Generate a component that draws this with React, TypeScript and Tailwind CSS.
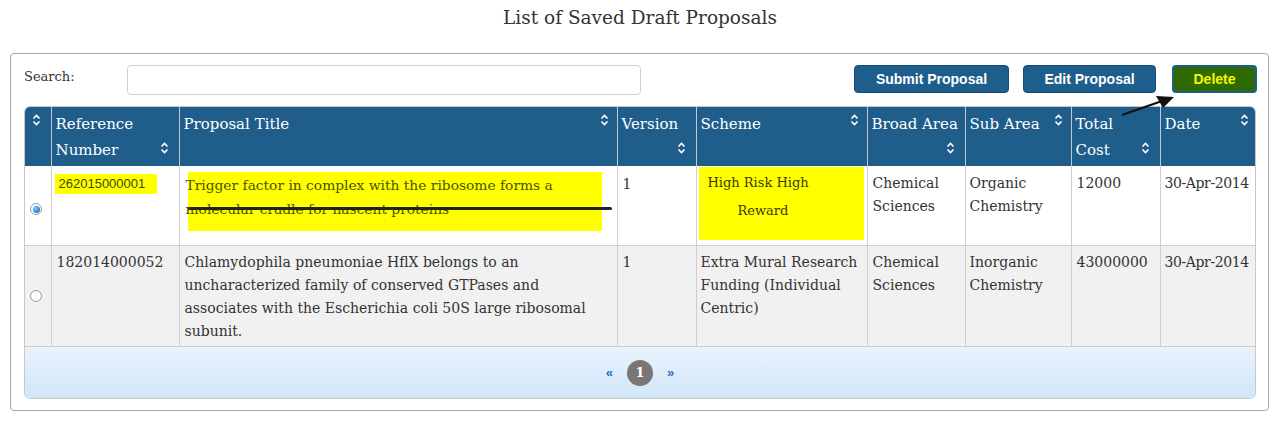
import React from "react"

const slab = { fontFamily: '"DejaVu Serif", "Liberation Serif", serif' }
const arial = { fontFamily: '"Liberation Sans", Arial, sans-serif' }

type Col = { label: React.ReactNode; w: string; sort: "top" | "bottom" | "center" }

const cols: Col[] = [
  { label: "", w: "w-[26px]", sort: "center" },
  { label: "Reference Number", w: "w-[128px]", sort: "bottom" },
  { label: "Proposal Title", w: "w-[438px]", sort: "top" },
  { label: "Version", w: "w-[79px]", sort: "bottom" },
  { label: "Scheme", w: "w-[171px]", sort: "top" },
  { label: "Broad Area", w: "w-[98px]", sort: "bottom" },
  { label: "Sub Area", w: "w-[106px]", sort: "top" },
  { label: <>Total<br />Cost</>, w: "w-[89px]", sort: "bottom" },
  { label: "Date", w: "w-[97px]", sort: "top" },
]

function SortIcon() {
  return (
    <svg width="9" height="12" viewBox="0 0 9 12" fill="none" stroke="white" strokeWidth="1.6">
      <path d="M1.5 4.5 L4.5 1.5 L7.5 4.5" />
      <path d="M1.5 7.5 L4.5 10.5 L7.5 7.5" />
    </svg>
  )
}

function Radio({ checked }: { checked?: boolean }) {
  return (
    <span className="inline-grid place-items-center w-[12px] h-[12px] rounded-full border border-[#9a9a9a] bg-white">
      {checked && (
        <span className="w-[7px] h-[7px] rounded-full bg-[radial-gradient(circle_at_35%_35%,#7cc4ff,#0a5fae)]" />
      )}
    </span>
  )
}

export default function App() {
  return (
    <div className="w-[1280px] h-[421px] bg-white text-[#333] overflow-hidden relative" style={slab}>
      <h1 className="text-center text-[18.5px] leading-[26px] pt-[5px] h-[53px]">List of Saved Draft Proposals</h1>

      <div className="mx-[10px] w-[1259px] border border-[#a8a8a8] rounded-[4px] px-[13px] pt-[11px] pb-[11px]">
        {/* toolbar */}
        <div className="flex items-start h-[41px]">
          <span className="text-[13px] leading-[20px] mt-[2px] w-[103px]">Search:</span>
          <input className="w-[514px] h-[30px] border border-[#d0d0d0] rounded-[4px] bg-white" />
          <div className="ml-auto flex mr-[-2px]" style={arial}>
            <button className="w-[155px] h-[28px] rounded-[4px] bg-[#1d5e8c] border border-[#174d75] text-white font-bold text-[14px]">
              Submit Proposal
            </button>
            <button className="ml-[14px] w-[133px] h-[28px] rounded-[4px] bg-[#1d5e8c] border border-[#174d75] text-white font-bold text-[14px]">
              Edit Proposal
            </button>
            <button className="ml-[16px] w-[85px] h-[28px] rounded-[4px] bg-[#2f6a00] border-2 border-[#1d5e8c] text-[#f5f500] font-bold text-[14px]">
              Delete
            </button>
          </div>
        </div>

        {/* table */}
        <div className="rounded-[6px] overflow-hidden border border-[#c8c8c8] w-[1232px]">
          <table className="table-fixed border-collapse w-[1232px] text-[14px] leading-[23px]">
            <thead>
              <tr className="bg-[#1f5e8a] text-white h-[59px]">
                {cols.map((c, i) => (
                  <th
                    key={i}
                    className={`${c.w} relative align-top text-left font-normal text-[15px] leading-[26px] pl-[4px] pr-[2px] pt-[4px] ${i > 0 ? "border-l border-[#c8c8c8]" : ""}`}
                  >
                    <span className={`block ${c.sort === "top" ? "pr-[14px]" : ""}`}>{c.label}</span>
                    {c.sort === "top" && (
                      <span className="absolute right-[8px] top-[7px]"><SortIcon /></span>
                    )}
                    {c.sort === "bottom" && (
                      <span className="absolute right-[10px] bottom-[12px]"><SortIcon /></span>
                    )}
                    {c.sort === "center" && (
                      <span className="absolute left-[7px] top-[7px]"><SortIcon /></span>
                    )}
                  </th>
                ))}
              </tr>
            </thead>
            <tbody>
              <tr className="bg-white h-[79px] border-b border-[#cfcfcf]">
                <td className="align-middle text-left pl-[5px] pt-[6px]"><Radio checked /></td>
                <td className="align-top border-l border-[#cfcfcf] px-[3px] pt-[6px]">
                  <span className="inline-block bg-[#ffff00] text-[#3f4a00] text-[13px] leading-[20px] w-[102px] pl-[4px]" style={arial}>
                    262015000001
                  </span>
                </td>
                <td className="align-top border-l border-[#cfcfcf] px-[6px] pt-[6px] relative">
                  <div className="bg-[#ffff00] text-[#4a5200] ml-[2px] w-[414px] h-[59px] pt-[1px] text-[13.8px] leading-[24px]">
                    <span className="ml-[-2px]">Trigger factor in complex with the ribosome forms a</span>
                    <br />
                    <span className="ml-[-2px]">molecular cradle for nascent proteins</span>
                  </div>
                  <span className="absolute left-[8px] top-[41px] w-[424px] h-[3px] bg-[#222] rounded-full" />
                </td>
                <td className="align-top border-l border-[#cfcfcf] px-[5px] pt-[7px]">1</td>
                <td className="align-top border-l border-[#cfcfcf] pt-px pl-[2px]">
                  <div className="bg-[#ffff00] w-[165px] h-[73px] text-[#3c3c00] text-[13px] leading-[28px] pt-[2px] pl-[9px]">
                    High Risk High
                    <br />
                    <span className="pl-[30px]">Reward</span>
                  </div>
                </td>
                <td className="align-top border-l border-[#cfcfcf] px-[5px] pt-[6px]">Chemical Sciences</td>
                <td className="align-top border-l border-[#cfcfcf] px-[4px] pt-[6px]">Organic Chemistry</td>
                <td className="align-top border-l border-[#cfcfcf] px-[5px] pt-[6px]">12000</td>
                <td className="align-top border-l border-[#cfcfcf] pl-[4px] pt-[6px] whitespace-nowrap tracking-[-0.4px]">30-Apr-2014</td>
              </tr>
              <tr className="bg-[#f2f1f1] h-[101px]">
                <td className="align-middle text-left pl-[5px] pt-[4px]"><Radio /></td>
                <td className="align-top border-l border-[#cfcfcf] px-[5px] pt-[5px]">182014000052</td>
                <td className="align-top border-l border-[#cfcfcf] px-[5px] pt-[5px]">
                  Chlamydophila pneumoniae HflX belongs to an uncharacterized family of conserved GTPases and
                  associates with the Escherichia coli 50S large ribosomal subunit.
                </td>
                <td className="align-top border-l border-[#cfcfcf] px-[5px] pt-[5px]">1</td>
                <td className="align-top border-l border-[#cfcfcf] px-[4px] pt-[5px]">
                  Extra Mural Research Funding (Individual Centric)
                </td>
                <td className="align-top border-l border-[#cfcfcf] px-[5px] pt-[5px]">Chemical Sciences</td>
                <td className="align-top border-l border-[#cfcfcf] px-[4px] pt-[5px]">Inorganic Chemistry</td>
                <td className="align-top border-l border-[#cfcfcf] px-[5px] pt-[5px]">43000000</td>
                <td className="align-top border-l border-[#cfcfcf] pl-[4px] pt-[5px] whitespace-nowrap tracking-[-0.4px]">30-Apr-2014</td>
              </tr>
            </tbody>
          </table>
          {/* pagination footer */}
          <div className="h-[52px] border-t border-[#cfcfcf] bg-[linear-gradient(#e8f3fd,#d2e5f8)] flex items-center justify-center gap-[14px] text-[13px]">
            <span className="text-[#1a6fd0] font-bold" style={arial}>«</span>
            <span className="w-[26px] h-[26px] rounded-full bg-[#7a7676] text-white font-bold grid place-items-center">1</span>
            <span className="text-[#1a6fd0] font-bold" style={arial}>»</span>
          </div>
        </div>
      </div>

      {/* annotation arrow */}
      <svg className="absolute left-0 top-0 pointer-events-none" width="1280" height="421">
        <line x1="1122" y1="115" x2="1162" y2="101" stroke="#111" strokeWidth="2.2" />
        <polygon points="1174,97 1156,96 1163,108" fill="#111" />
      </svg>
    </div>
  )
}
